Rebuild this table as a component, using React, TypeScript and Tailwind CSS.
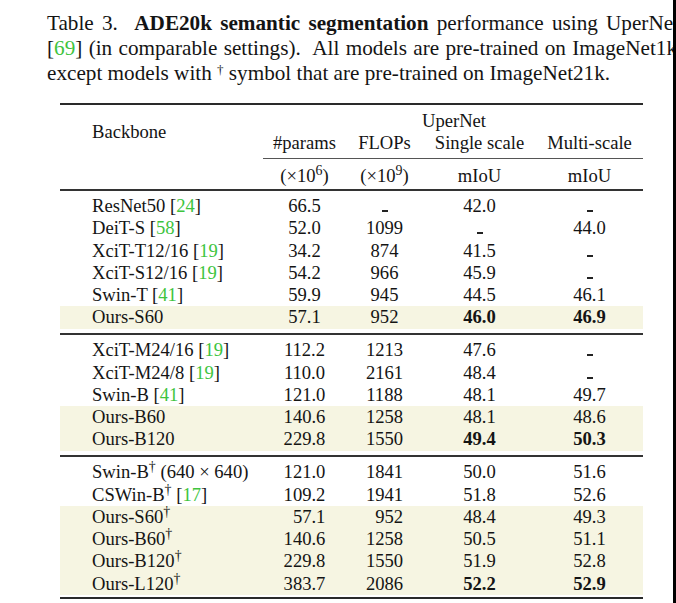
import React from "react";

const G = ({ children }: { children: React.ReactNode }) => (
  <span className="text-[#3ec43e]">{children}</span>
);
const Cite = ({ n }: { n: string }) => (
  <>
    [<G>{n}</G>]
  </>
);
const Dash = () => <span className="inline-block w-[6px] h-[2px] bg-[#222]" />;
const Ph = ({ children }: { children: React.ReactNode }) => (
  <span className="invisible">{children}</span>
);
const D = () => <sup>†</sup>;

type Row = {
  name: React.ReactNode;
  p: React.ReactNode;
  f: React.ReactNode;
  s: React.ReactNode;
  m: React.ReactNode;
  hl?: boolean;
};

const groups: Row[][] = [
  [
    { name: <>ResNet50 <Cite n="24" /></>, p: "66.5", f: <Dash />, s: "42.0", m: <Dash /> },
    { name: <>DeiT-S <Cite n="58" /></>, p: "52.0", f: "1099", s: <Dash />, m: "44.0" },
    { name: <>XciT-T12/16 <Cite n="19" /></>, p: "34.2", f: "874", s: "41.5", m: <Dash /> },
    { name: <>XciT-S12/16 <Cite n="19" /></>, p: "54.2", f: "966", s: "45.9", m: <Dash /> },
    { name: <>Swin-T <Cite n="41" /></>, p: "59.9", f: "945", s: "44.5", m: "46.1" },
    { name: "Ours-S60", p: "57.1", f: "952", s: <b>46.0</b>, m: <b>46.9</b>, hl: true },
  ],
  [
    { name: <>XciT-M24/16 <Cite n="19" /></>, p: "112.2", f: "1213", s: "47.6", m: <Dash /> },
    { name: <>XciT-M24/8 <Cite n="19" /></>, p: "110.0", f: "2161", s: "48.4", m: <Dash /> },
    { name: <>Swin-B <Cite n="41" /></>, p: "121.0", f: "1188", s: "48.1", m: "49.7" },
    { name: "Ours-B60", p: "140.6", f: "1258", s: "48.1", m: "48.6", hl: true },
    { name: "Ours-B120", p: "229.8", f: "1550", s: <b>49.4</b>, m: <b>50.3</b>, hl: true },
  ],
  [
    { name: <>Swin-B<D /> (640 × 640)</>, p: "121.0", f: "1841", s: "50.0", m: "51.6" },
    { name: <>CSWin-B<D /> <Cite n="17" /></>, p: "109.2", f: "1941", s: "51.8", m: "52.6" },
    { name: <>Ours-S60<D /></>, p: <><Ph>0</Ph>57.1</>, f: <><Ph>0</Ph>952</>, s: "48.4", m: "49.3", hl: true },
    { name: <>Ours-B60<D /></>, p: "140.6", f: "1258", s: "50.5", m: "51.1", hl: true },
    { name: <>Ours-B120<D /></>, p: "229.8", f: "1550", s: "51.9", m: "52.8", hl: true },
    { name: <>Ours-L120<D /></>, p: "383.7", f: "2086", s: <b>52.2</b>, m: <b>52.9</b>, hl: true },
  ],
];

const cols = "grid grid-cols-[203px_83px_77px_113px_107px]";

function TableRow({ r }: { r: Row }) {
  return (
    <div
      className={`${cols} h-[22.3px] leading-[22.3px] items-center ${
        r.hl ? "bg-[#f6f5e2]" : ""
      }`}
    >
      <div className="pl-[32px] whitespace-nowrap">{r.name}</div>
      <div className="text-center">{r.p}</div>
      <div className="text-center">{r.f}</div>
      <div className="text-center">{r.s}</div>
      <div className="text-center">{r.m}</div>
    </div>
  );
}

export default function App() {
  return (
    <div
      className="flex w-[676px] h-[603px] overflow-hidden bg-white text-[#141414]"
      style={{ fontFamily: '"Liberation Serif", "Times New Roman", serif' }}
    >
      <div className="flex-1 min-w-0 overflow-hidden">
        <div className="pt-[11px] pl-[47px] text-[21.2px] leading-[25px]">
          <div className="w-[632px] whitespace-nowrap text-justify [text-align-last:justify]">
            Table 3.{"\u00a0 "}
            <b>ADE20k semantic segmentation</b> performance using UperNet
          </div>
          <div className="w-[630px] whitespace-nowrap text-justify [text-align-last:justify]">
            [<G>69</G>] (in comparable settings).{"\u00a0 "}All models are pre-trained on ImageNet1k
          </div>
          <div className="whitespace-nowrap">
            except models with <sup className="text-[13px]">†</sup> symbol that are pre-trained on ImageNet21k.
          </div>
        </div>

        <div className="ml-[60px] mt-[17px] w-[583px] text-[18.6px]">
          <div className="h-[2px] bg-[#2a2a2a]" />
          <div className={`${cols} pt-[5px] leading-[22px]`}>
            <div className="row-span-2 pl-[32px] flex items-center">Backbone</div>
            <div className="col-span-4 h-[22px] pl-[159px]">UperNet</div>
            <div className="h-[22px] text-center">#params</div>
            <div className="h-[22px] text-center">FLOPs</div>
            <div className="h-[22px] text-center whitespace-nowrap">Single scale</div>
            <div className="h-[22px] text-center">Multi-scale</div>
            <div />
            <div className="col-span-4 pt-[4px] pb-[6px]">
              <div className="h-[1px] bg-[#555]" />
            </div>
            <div />
            <div className="text-center h-[22px]">
              (×10<sup>6</sup>)
            </div>
            <div className="text-center h-[22px]">
              (×10<sup>9</sup>)
            </div>
            <div className="text-center h-[22px]">mIoU</div>
            <div className="text-center h-[22px]">mIoU</div>
          </div>
          {groups.map((g, gi) => (
            <div key={gi}>
              <div className={`h-[1.5px] bg-[#333] ${gi === 0 ? "mt-[2px]" : ""}`} />
              <div className={`pt-[4.5px] ${gi === 2 ? "pb-[2px]" : "pb-[4.5px]"}`}>
                {g.map((r, ri) => (
                  <TableRow key={ri} r={r} />
                ))}
              </div>
            </div>
          ))}
          <div className="h-[2px] bg-[#2a2a2a]" />
        </div>
      </div>
      <div className="w-[3px] bg-black" />
    </div>
  );
}
